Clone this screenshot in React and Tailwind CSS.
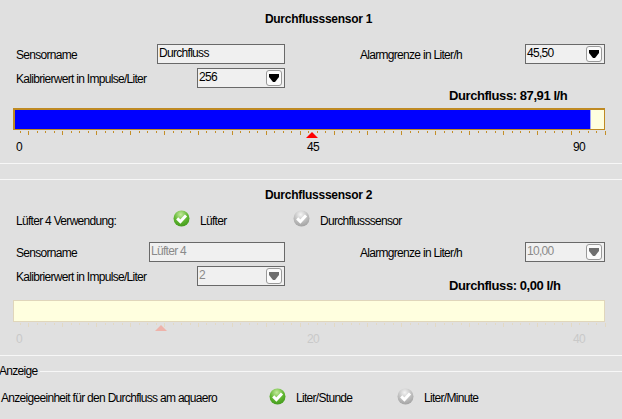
const MAJOR_STEP = 33.9;

function Ruler({ color }) {
  const ticks = [];
  for (let i = 0; i < 70; i++) {
    const x = Math.round(20 + (i * MAJOR_STEP) / 4);
    const major = (i + 3) % 4 === 0;
    ticks.push(<rect key={i} x={x} y={0} width={1} height={major ? 4 : 2} fill={color} />);
  }
  return (
    <svg width="622" height="5" className="block">
      {ticks}
    </svg>
  );
}

function Check({ on }) {
  const id = on ? "gOn" : "gOff";
  return (
    <svg width="17" height="17" viewBox="0 0 17 17" className="block shrink-0">
      <defs>
        <radialGradient id={id} cx="0.45" cy="0.25" r="0.85">
          <stop offset="0" stopColor={on ? "#c4eb9c" : "#f4f4f4"} />
          <stop offset="0.5" stopColor={on ? "#62b733" : "#c0c0c0"} />
          <stop offset="1" stopColor={on ? "#3b9316" : "#9a9a9a"} />
        </radialGradient>
      </defs>
      <circle cx="8.5" cy="8.5" r="8" fill={`url(#${id})`} />
      <path d="M4.2 8.4 L7.4 11.6 L13 5.6" fill="none" stroke="#ffffff" strokeWidth="3" />
    </svg>
  );
}

function TextBox({ value, width, disabled }) {
  return (
    <div className={`${width} h-[20px] border border-[#696969] bg-[#f0f0f0] pl-[1px] leading-[16px] ${disabled ? "text-[#8a8a8a]" : "text-black"}`}>
      {value}
    </div>
  );
}

function Combo({ value, width, disabled }) {
  return (
    <div className={`${width} h-[20px] border border-[#696969] bg-[#f0f0f0] pl-[1px] pr-[2px] flex items-center justify-between ${disabled ? "text-[#8a8a8a]" : "text-black"}`}>
      <span className="leading-[16px] -mt-[3px]">{value}</span>
      <span className="w-[16px] h-[16px] rounded-[3px] border border-[#9a9a9a] bg-[#fbfbfb] flex items-center justify-center">
        <svg width="10" height="8" viewBox="0 0 10 8" className="block">
          <path d="M0 0H10V3L6 8H4L0 3Z" fill={disabled ? "#6e6e6e" : "#000000"} />
        </svg>
      </span>
    </div>
  );
}

function Bar({ fill, dim, labels, marker }) {
  return (
    <div className="relative">
      <div className={`ml-[13px] w-[592px] h-[22px] border ${dim ? "border-[#e0d6bb]" : "border-[#bf8a22] border-t-2 border-l-2"} bg-[#ffffdf] flex`}>
        {fill ? <div className="w-[576px] h-full bg-[#0000ff] border-r border-[#9aa0ff]" /> : null}
      </div>
      <div className="mt-[1px]">
        <Ruler color={dim ? "#e3d9c3" : "#c48f28"} />
      </div>
      <div className={`absolute ${marker} w-0 h-0 border-x-[6px] border-x-transparent border-b-[6px] ${dim ? "border-b-[#eeb3aa]" : "border-b-[#ff0000]"}`} />
      <div className={`flex mt-[4px] h-[14px] leading-[14px] ${dim ? "text-[#c9c9c9]" : "text-black"}`}>
        <span className="ml-[16px] w-[291px]">{labels[0]}</span>
        <span className="w-[266px]">{labels[1]}</span>
        <span>{labels[2]}</span>
      </div>
    </div>
  );
}

function Choice({ on, label, labelClass }) {
  return (
    <div className="flex items-center gap-[10px]">
      <Check on={on} />
      <span className={labelClass}>{label}</span>
    </div>
  );
}

function Title({ children }) {
  return (
    <h2 className="h-[14px] leading-[14px] font-bold tracking-[-0.27px] text-center pl-[15px]">{children}</h2>
  );
}

function Reading({ children, className }) {
  return (
    <div className={`h-[14px] leading-[14px] pl-[449px] font-bold text-[13px] tracking-[-0.42px] ${className}`}>{children}</div>
  );
}

export default function App() {
  return (
    <div
      className="w-[622px] h-[419px] bg-[#e0e0e0] overflow-hidden text-[12px] tracking-[-0.7px] text-black"
      style={{ fontFamily: '"Liberation Sans", Arial, sans-serif' }}
    >
      {/* Sensor 1 */}
      <section className="h-[164px] border-b border-[#f7f7f7] pt-[12px]">
        <Title>Durchflusssensor 1</Title>
        <div className="flex items-center mt-[18px] pr-[17px]">
          <div className="w-[285px] pl-[16px] flex items-center justify-between">
            <span className="mt-[2px]">Sensorname</span>
            <TextBox value="Durchfluss" width="w-[128px]" />
          </div>
          <span className="ml-[75px] mt-[2px]">Alarmgrenze in Liter/h</span>
          <div className="ml-auto"><Combo value="45,50" width="w-[80px]" /></div>
        </div>
        <div className="w-[285px] pl-[16px] flex items-center justify-between mt-[4px]">
          <span className="mt-[2px]">Kalibrierwert in Impulse/Liter</span>
          <Combo value="256" width="w-[88px]" />
        </div>
        <Reading className="mt-[1px] mb-[5px]">Durchfluss: 87,91 l/h</Reading>
        <Bar fill labels={["0", "45", "90"]} marker="left-[306px] top-[24px]" />
      </section>

      {/* Sensor 2 */}
      <section className="h-[177px] border-y border-[#f7f7f7] mt-[15px] pt-[8px]">
        <Title>Durchflusssensor 2</Title>
        <div className="flex items-center mt-[8px] pl-[16px] h-[17px]">
          <span className="w-[157px] mt-[5px]">Lüfter 4 Verwendung:</span>
          <div className="w-[120px]"><Choice on label="Lüfter" labelClass="mt-[5px]" /></div>
          <Choice label="Durchflusssensor" labelClass="mt-[5px]" />
        </div>
        <div className="flex items-center mt-[15px] pr-[17px]">
          <div className="w-[285px] pl-[16px] flex items-center justify-between">
            <span className="mt-[2px]">Sensorname</span>
            <TextBox value="Lüfter 4" width="w-[136px]" disabled />
          </div>
          <span className="ml-[75px] mt-[2px]">Alarmgrenze in Liter/h</span>
          <div className="ml-auto"><Combo value="10,00" width="w-[80px]" disabled /></div>
        </div>
        <div className="w-[285px] pl-[16px] flex items-center justify-between mt-[4px]">
          <span className="mt-[2px]">Kalibrierwert in Impulse/Liter</span>
          <Combo value="2" width="w-[88px]" disabled />
        </div>
        <Reading className="-mt-[7px] mb-[7px]">Durchfluss: 0,00 l/h</Reading>
        <Bar dim labels={["0", "20", "40"]} marker="left-[155px] top-[25px]" />
      </section>

      {/* Anzeige */}
      <section>
        <div className="flex items-center mt-[8px] h-[14px]">
          <span className="leading-[14px] -ml-[1px] pr-[3px]">Anzeige</span>
          <div className="flex-1 h-px bg-[#f7f7f7]" />
        </div>
        <div className="flex items-center mt-[10px] h-[17px] pl-[1px]">
          <span className="w-[268px] mt-[2px]">Anzeigeeinheit für den Durchfluss am aquaero</span>
          <div className="w-[128px]"><Choice on label="Liter/Stunde" labelClass="mt-[2px]" /></div>
          <Choice label="Liter/Minute" labelClass="mt-[2px]" />
        </div>
      </section>
    </div>
  );
}
